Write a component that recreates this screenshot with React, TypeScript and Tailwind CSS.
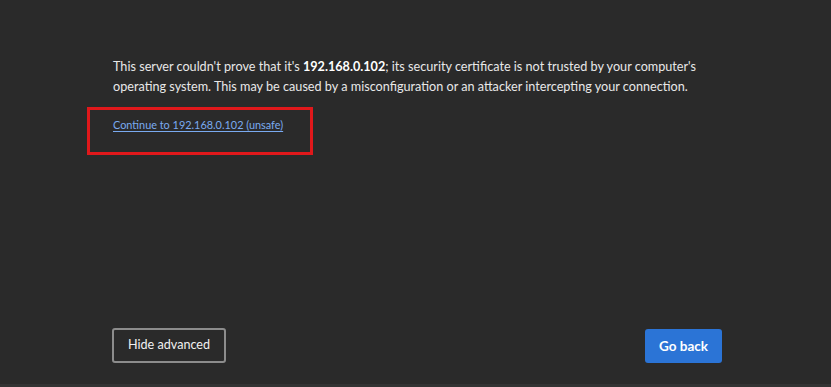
export default function App() {
  return (
    <div className="w-[831px] h-[387px] bg-[#2a2a2a] flex flex-col border-b-[3px] border-[#333333] overflow-hidden" style={{ fontFamily: 'Lato, "Noto Sans", sans-serif' }}>
      <div className="pl-[113px] pt-[57px] text-[12.65px] leading-[20px] text-[#e8e8e8]">
        <p className="whitespace-nowrap">
          This server couldn't prove that it's <b className="font-bold text-white">192.168.0.102</b>; its security certificate is not trusted by your computer's
          <br />
          operating system. This may be caused by a misconfiguration or an attacker intercepting your connection.
        </p>
      </div>
      <div className="ml-[87px] mt-[10px] w-[226px] h-[48px] border-[3px] border-[#e0181b] pl-[23px] pt-[8px]">
        <a className="block text-[10.9px] leading-[14px] text-[#7aaaf0] underline underline-offset-2">Continue to 192.168.0.102 (unsafe)</a>
      </div>
      <div className="flex-1" />
      <div className="flex justify-between items-end pl-[112px] pr-[109px] pb-[21px]">
        <button className="w-[114px] h-[35px] rounded-[3px] border-2 border-[#8c8c8c] text-[12.6px] text-[#f0f0f0]">Hide advanced</button>
        <button className="w-[77px] h-[34px] rounded-[3px] bg-[#2b74d6] text-[13.5px] font-bold text-white">Go back</button>
      </div>
    </div>
  );
}
